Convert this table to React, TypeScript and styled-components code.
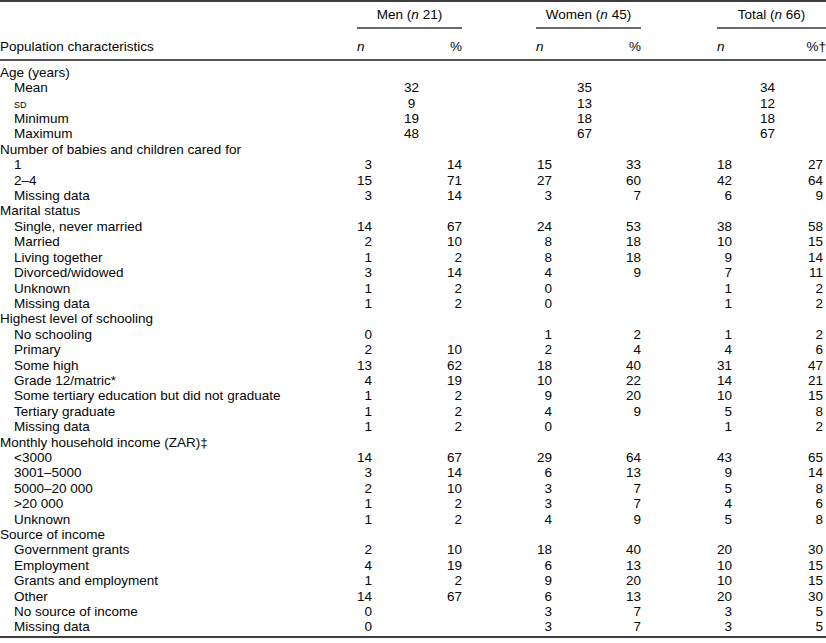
import React from 'react'
import styled, { createGlobalStyle } from 'styled-components'

const GlobalStyle = createGlobalStyle`
  html, body {
    margin: 0;
    padding: 0;
    background: #ffffff;
  }
  body {
    font-family: 'Liberation Sans', Arial, Helvetica, sans-serif;
    color: #050505;
  }
`

// label | men n | men % | gap | women n | women % | gap | total n | total %
const COLUMNS = '357px 15px 90px 74px 16px 89px 76px 15px 94px'

type Cells = [string, string, string, string, string, string]

type Line =
  | { kind: 'section'; label: string }
  | { kind: 'span'; label: string; values: [string, string, string] }
  | { kind: 'item'; label: string; values: Cells }

const lines: Line[] = [
  { kind: 'section', label: 'Age (years)' },
  { kind: 'span', label: 'Mean', values: ['32', '35', '34'] },
  { kind: 'span', label: 'sd', values: ['9', '13', '12'] },
  { kind: 'span', label: 'Minimum', values: ['19', '18', '18'] },
  { kind: 'span', label: 'Maximum', values: ['48', '67', '67'] },
  { kind: 'section', label: 'Number of babies and children cared for' },
  { kind: 'item', label: '1', values: ['3', '14', '15', '33', '18', '27'] },
  { kind: 'item', label: '2–4', values: ['15', '71', '27', '60', '42', '64'] },
  { kind: 'item', label: 'Missing data', values: ['3', '14', '3', '7', '6', '9'] },
  { kind: 'section', label: 'Marital status' },
  { kind: 'item', label: 'Single, never married', values: ['14', '67', '24', '53', '38', '58'] },
  { kind: 'item', label: 'Married', values: ['2', '10', '8', '18', '10', '15'] },
  { kind: 'item', label: 'Living together', values: ['1', '2', '8', '18', '9', '14'] },
  { kind: 'item', label: 'Divorced/widowed', values: ['3', '14', '4', '9', '7', '11'] },
  { kind: 'item', label: 'Unknown', values: ['1', '2', '0', '', '1', '2'] },
  { kind: 'item', label: 'Missing data', values: ['1', '2', '0', '', '1', '2'] },
  { kind: 'section', label: 'Highest level of schooling' },
  { kind: 'item', label: 'No schooling', values: ['0', '', '1', '2', '1', '2'] },
  { kind: 'item', label: 'Primary', values: ['2', '10', '2', '4', '4', '6'] },
  { kind: 'item', label: 'Some high', values: ['13', '62', '18', '40', '31', '47'] },
  { kind: 'item', label: 'Grade 12/matric*', values: ['4', '19', '10', '22', '14', '21'] },
  {
    kind: 'item',
    label: 'Some tertiary education but did not graduate',
    values: ['1', '2', '9', '20', '10', '15']
  },
  { kind: 'item', label: 'Tertiary graduate', values: ['1', '2', '4', '9', '5', '8'] },
  { kind: 'item', label: 'Missing data', values: ['1', '2', '0', '', '1', '2'] },
  { kind: 'section', label: 'Monthly household income (ZAR)‡' },
  { kind: 'item', label: '<3000', values: ['14', '67', '29', '64', '43', '65'] },
  { kind: 'item', label: '3001–5000', values: ['3', '14', '6', '13', '9', '14'] },
  { kind: 'item', label: '5000–20 000', values: ['2', '10', '3', '7', '5', '8'] },
  { kind: 'item', label: '>20 000', values: ['1', '2', '3', '7', '4', '6'] },
  { kind: 'item', label: 'Unknown', values: ['1', '2', '4', '9', '5', '8'] },
  { kind: 'section', label: 'Source of income' },
  { kind: 'item', label: 'Government grants', values: ['2', '10', '18', '40', '20', '30'] },
  { kind: 'item', label: 'Employment', values: ['4', '19', '6', '13', '10', '15'] },
  { kind: 'item', label: 'Grants and employment', values: ['1', '2', '9', '20', '10', '15'] },
  { kind: 'item', label: 'Other', values: ['14', '67', '6', '13', '20', '30'] },
  { kind: 'item', label: 'No source of income', values: ['0', '', '3', '7', '3', '5'] },
  { kind: 'item', label: 'Missing data', values: ['0', '', '3', '7', '3', '5'] }
]

// shift: nudge of the spanning summary values (mean, sd, ...) inside each group
const groups = [
  { title: 'Men', n: '21', start: 2, shift: 2 },
  { title: 'Women', n: '45', start: 5, shift: -4 },
  { title: 'Total', n: '66', start: 8, shift: -4 }
]

const Sheet = styled.div`
  width: 826px;
  font-size: 13.5px;
  line-height: 15.4px;
  border-top: 2px solid #3f3f3f;
`

const Head = styled.div`
  border-bottom: 2px solid #555555;
  padding: 5px 0 4px;
`

const Row = styled.div`
  display: grid;
  grid-template-columns: ${COLUMNS};
  white-space: nowrap;
`

const GroupRow = styled(Row)`
  margin-bottom: 10px;
`

const GroupTitle = styled.div<{ $start: number }>`
  grid-column: ${(p) => p.$start} / span 2;
  text-align: center;
  padding-bottom: 5px;
  border-bottom: 2px solid #6a6a6a;
`

const Italic = styled.i`
  font-style: italic;
`

const HeadCell = styled.div<{ $col: number; $align: 'left' | 'right' }>`
  grid-column: ${(p) => p.$col};
  text-align: ${(p) => p.$align};
`

const Body = styled.div`
  padding: 4px 0 1px;
  border-bottom: 2px solid #3f3f3f;
`

const Label = styled.div<{ $indent: boolean }>`
  grid-column: 1;
  padding-left: ${(p) => (p.$indent ? '14px' : '0')};
`

const SmallCaps = styled.span`
  font-variant: small-caps;
`

const Num = styled.div<{ $col: number; $pad?: number }>`
  grid-column: ${(p) => p.$col};
  text-align: right;
  padding-right: ${(p) => p.$pad ?? 0}px;
`

const SpanNum = styled.div<{ $start: number; $shift: number }>`
  grid-column: ${(p) => p.$start} / span 2;
  text-align: center;
  transform: translateX(${(p) => p.$shift}px);
`

const numCols = [2, 3, 5, 6, 8, 9]

export default function App() {
  return (
    <>
      <GlobalStyle />
      <Sheet>
        <Head>
          <GroupRow>
            {groups.map((g) => (
              <GroupTitle key={g.title} $start={g.start}>
                {g.title} (<Italic>n</Italic> {g.n})
              </GroupTitle>
            ))}
          </GroupRow>
          <Row>
            <HeadCell $col={1} $align="left">
              Population characteristics
            </HeadCell>
            {groups.map((g) => (
              <React.Fragment key={g.title}>
                <HeadCell $col={g.start} $align="left">
                  <Italic>n</Italic>
                </HeadCell>
                <HeadCell $col={g.start + 1} $align="right">
                  {g.title === 'Total' ? '%†' : '%'}
                </HeadCell>
              </React.Fragment>
            ))}
          </Row>
        </Head>
        <Body>
          {lines.map((line, i) => {
            if (line.kind === 'section') {
              return (
                <Row key={i}>
                  <Label $indent={false}>{line.label}</Label>
                </Row>
              )
            }
            if (line.kind === 'span') {
              return (
                <Row key={i}>
                  <Label $indent>
                    {line.label === 'sd' ? <SmallCaps>sd</SmallCaps> : line.label}
                  </Label>
                  {line.values.map((v, j) => (
                    <SpanNum key={j} $start={groups[j].start} $shift={groups[j].shift}>
                      {v}
                    </SpanNum>
                  ))}
                </Row>
              )
            }
            return (
              <Row key={i}>
                <Label $indent>{line.label}</Label>
                {line.values.map((v, j) => (
                  <Num key={j} $col={numCols[j]} $pad={j === 5 ? 3 : 0}>
                    {v}
                  </Num>
                ))}
              </Row>
            )
          })}
        </Body>
      </Sheet>
    </>
  )
}
